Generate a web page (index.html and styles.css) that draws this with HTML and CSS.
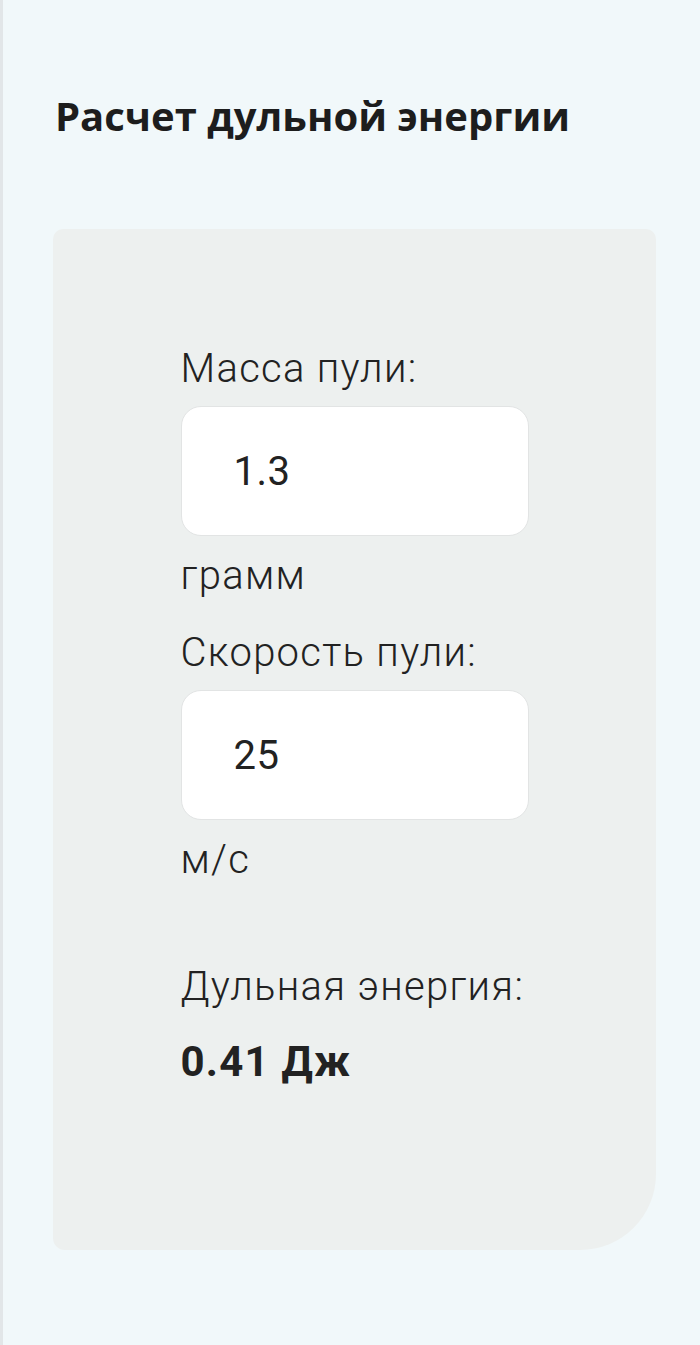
FILE: index.html
```html
<!DOCTYPE html>
<html lang="ru">
<head>
    <meta charset="UTF-8">
    <meta name="viewport" content="width=device-width, initial-scale=1.0">
    <title>Расчет дульной энергии</title>
    <link rel="stylesheet" href="styles.css">
</head>
<body>
    <div class="page">
        <h2 class="title">Расчет дульной энергии</h2>
        <div class="calc">
            <div class="calc-body">
                <label class="field-label" for="mass">Масса пули:</label>
                <input class="field-input" type="text" id="mass" value="1.3">
                <div class="unit">грамм</div>

                <label class="field-label" for="speed">Скорость пули:</label>
                <input class="field-input" type="text" id="speed" value="25">
                <div class="unit">м/с</div>

                <div class="result-label">Дульная энергия:</div>
                <div class="result-value" id="energy">0.41 Дж</div>
            </div>
        </div>
    </div>
</body>
</html>
```

FILE: styles.css
```css
body {
    margin: 0;
    background-color: #f1f8fa;
    font-family: Roboto, "Liberation Sans", sans-serif;
    color: #222;
}
.page {
    min-height: 1345px;
    box-sizing: border-box;
    border-left: 3px solid #e2e6e8;
    padding: 0 44px 0 50px;
    overflow: hidden;
}
.title {
    margin: 91px 0 88px 2px;
    font-family: "Open Sans", Roboto, sans-serif;
    font-size: 40px;
    line-height: 50px;
    font-weight: 700;
    color: #1d1d1d;
}
.calc {
    background-color: #edf0ef;
    border-radius: 10px 10px 76px 12px;
    padding: 110px 0 158px;
}
.calc-body {
    width: 348px;
    margin: 0 auto;
    font-size: 40px;
    line-height: 60px;
    font-weight: 300;
    letter-spacing: 1.3px;
}
.field-label {
    display: block;
}
.field-input {
    display: block;
    box-sizing: border-box;
    width: 100%;
    height: 130px;
    margin: 7px 0 10px;
    padding: 0 0 0 52px;
    border: 1px solid #e2e4e4;
    border-radius: 20px;
    background-color: #fff;
    font-family: inherit;
    font-size: 40px;
    font-weight: 400;
    letter-spacing: 0.5px;
    color: #222;
    outline: none;
}
.unit + .field-label {
    margin-top: 17px;
}
.field-label + .field-input {
    margin-top: 7px;
}
.unit + .result-label {
    margin-top: 67px;
}
.result-value {
    margin-top: 15px;
    font-size: 42px;
    font-weight: 700;
    letter-spacing: 1.2px;
}
```
